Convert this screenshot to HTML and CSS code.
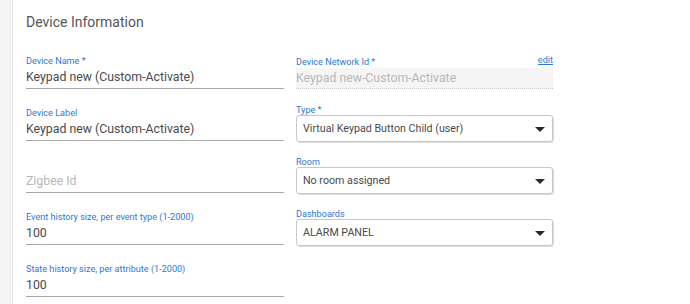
FILE: index.html
```html
<!DOCTYPE html>
<html lang="en">

<head>
  <meta charset="UTF-8">
  <meta name="viewport" content="width=device-width, initial-scale=1.0">
  <title>Device Information</title>
  <link rel="stylesheet" href="styles.css">
</head>

<body>
  <div class="sidebar"></div>
  <div class="main">
    <h2 class="title">Device Information</h2>

    <div class="form-grid">
      <div class="column">
        <div class="field">
          <label>Device Name *</label>
          <div class="input">Keypad new (Custom-Activate)</div>
        </div>
        <div class="field">
          <label>Device Label</label>
          <div class="input">Keypad new (Custom-Activate)</div>
        </div>
        <div class="field">
          <label></label>
          <div class="input placeholder">Zigbee Id</div>
        </div>
        <div class="field">
          <label>Event history size, per event type (1-2000)</label>
          <div class="input">100</div>
        </div>
        <div class="field">
          <label>State history size, per attribute (1-2000)</label>
          <div class="input">100</div>
        </div>
      </div>

      <div class="column">
        <div class="field network">
          <div class="label-row">
            <label>Device Network Id *</label>
            <a href="#" class="edit">edit</a>
          </div>
          <div class="input disabled">Keypad new-Custom-Activate</div>
        </div>
        <div class="field select-field">
          <label>Type *</label>
          <div class="select">Virtual Keypad Button Child (user)<span class="arrow"></span></div>
        </div>
        <div class="field select-field">
          <label>Room</label>
          <div class="select">No room assigned<span class="arrow"></span></div>
        </div>
        <div class="field select-field">
          <label>Dashboards</label>
          <div class="select">ALARM PANEL<span class="arrow"></span></div>
        </div>
      </div>
    </div>
  </div>
</body>

</html>
```

FILE: styles.css
```css
* {
  box-sizing: border-box;
  margin: 0;
  padding: 0;
  font-family: Roboto, 'Liberation Sans', sans-serif;
}

body {
  display: flex;
  height: 100vh;
  background: #fff;
  overflow: hidden;
}

.sidebar {
  width: 13px;
  flex-shrink: 0;
  background: #f5f5f5;
  border-right: 1px solid #e8e8e8;
}

.main {
  flex: 1;
  padding: 13px 13px 0 13px;
}

.title {
  font-size: 14px;
  font-weight: 400;
  line-height: 18px;
  color: #555;
  margin-bottom: 24px;
}

.form-grid {
  display: grid;
  grid-template-columns: 258px 257px;
  column-gap: 12px;
}

.column {
  display: flex;
  flex-direction: column;
}

.field {
  display: flex;
  flex-direction: column;
  height: 52px;
}

.field label {
  font-size: 9.1px;
  line-height: 12px;
  height: 12px;
  color: #2a7ad2;
}

.input {
  font-size: 12.3px;
  line-height: 21px;
  height: 22px;
  color: #4a4a4a;
  border-bottom: 1px solid #a8a8a8;
}

.input.placeholder {
  color: #b8b8b8;
}

.label-row {
  display: flex;
  justify-content: space-between;
  margin-top: 1px;
}

.edit {
  font-size: 9.1px;
  line-height: 12px;
  color: #2a7ad2;
  margin-top: -2px;
}

.input.disabled {
  background: #f5f5f5;
  color: #b8b8b8;
  border-bottom: 1px dotted #c4c4c4;
  height: 21px;
}

.select-field label {
  margin-top: -3px;
  margin-bottom: -1px;
}

.select {
  position: relative;
  height: 27px;
  border: 1px solid #c8c8c8;
  border-radius: 3px;
  box-shadow: 1px 1px 0 #dcdcdc;
  font-size: 10.7px;
  line-height: 25px;
  padding-left: 6px;
  color: #4a4a4a;
}

.arrow {
  position: absolute;
  right: 7px;
  top: 11px;
  width: 0;
  height: 0;
  border-left: 5px solid transparent;
  border-right: 5px solid transparent;
  border-top: 5px solid #2a2a2a;
}
```
